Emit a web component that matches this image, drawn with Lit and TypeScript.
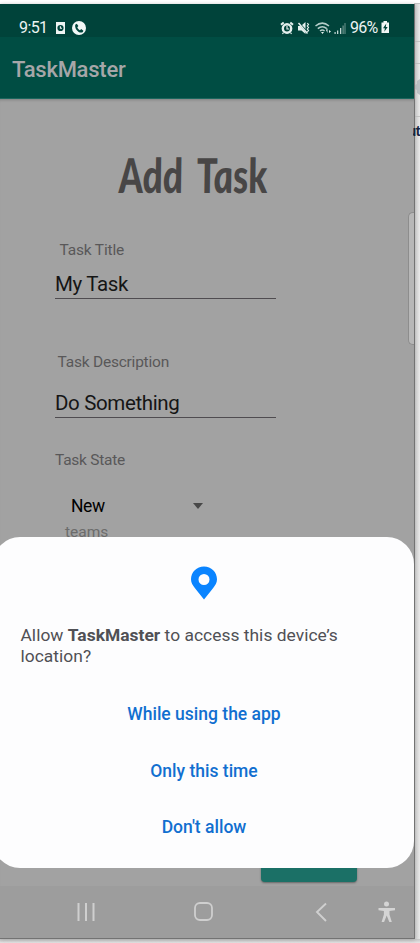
import { LitElement, html, css, svg } from "lit";
import { customElement } from "lit/decorators.js";

const statusLeft = svg`
  <path fill="#eef5f3" d="M1 1h9v12H1z"/><circle cx="5.5" cy="7" r="3.1" fill="#00453c"/>
  <path d="M5.4 5.2v2h1.6" fill="none" stroke="#eef5f3" stroke-width="1.1"/>
  <circle cx="24" cy="7" r="7" fill="#f2f8f7"/>
  <path fill="#00453c" d="M20.2 3.7l1.6-.9 1.6 2.3-1.1 1.2c.5 1.3 1.4 2.3 2.7 2.9l1.2-1.1 2.2 1.6c-.3 1.2-1.1 1.9-2.2 1.9-3.5-.2-6.600-4-6-7.900z"/>`;

const statusRight = svg`
  <g fill="none" stroke="#e4efed">
    <circle cx="7" cy="7.500" r="4.200" stroke-width="2.400"/><path stroke-width="1.2" d="M7 5v3h2.200M3.500 11.500l-1 1.500M10.500 11.500l1 1.500"/>
    <path stroke-width="2" d="M1 3.800L3.700 1.500M13 3.800L10.300 1.500"/>
    <path stroke-width="1.500" d="M18.500 2l9 10.500"/>
    <path stroke-width="1.200" d="M27.300 2l1.200 1.500-1.200 1.500 1.200 1.500-1.200 1.500 1.200 1.500-1.200 1.500"/>
    <g stroke="#b4cdc9" stroke-width="1.500"><path d="M35.500 5q6.800-5.800 13.500 0M37.800 7.600q4.500-3.800 9 0M40 10q2.300-1.900 4.600 0"/></g>
  </g>
  <path fill="#e4efed" d="M18 5h2.500l5 6v2l-4-3.500H18zM22 4l3.500-3v7zM41 11h3l-1.500 2zM46 9l1.500-1.800V12zM49 9l2 1.500-2 1.500z"/>
  <g fill="#c4d7d4"><path d="M54.500 11h1.200v2h-1.200zM57 9.500h1.300V13H57zM60 7h1.300v6H60z"/></g>
  <path fill="#6d958e" d="M62.500 4.500h1.200V13h-1.200zM64.500 2h1V13h-1z"/>`;

@customElement("app-root")
class AppRoot extends LitElement {
  static styles = css`
    :host { display: block; position: relative; width: 420px; height: 943px; overflow: hidden; background: #fff; font-family: Roboto, sans-serif; }
    * { box-sizing: border-box; }
    .desktop { display: flex; flex-direction: column; align-items: flex-end; height: 943px; background: linear-gradient(90deg, transparent 414px, #cfcfcf 414px, #e9e9e9 420px); }
    .edge { width: 6px; border-bottom: 1px solid #c4c4c4; flex: none; overflow: hidden; }
    .e0 { height: 4px; background: #fff; } .e1 { height: 38px; } .e2 { height: 22px; } .e3 { height: 53px; padding: 14px 0 0 1px; }
    .e3 svg { display: block; }
    .edge-word { width: 7px; height: 26px; overflow: hidden; font: 700 14px/26px "Liberation Sans", sans-serif; color: #16243c; display: flex; justify-content: flex-end; margin-top: 1px; letter-spacing: -.5px; position: relative; z-index: 1; }
    .shadow { margin-top: auto; width: 420px; height: 4px; background: linear-gradient(#c5c5c5, #e6e6e6); }
    .phone { position: absolute; left: 0; top: 4px; width: 415px; height: 935px; display: flex; flex-direction: column; background: #a2a2a2; border: solid #737373; border-width: 0 1px 1px 0; overflow: hidden; box-shadow: 0 1px 4px #aaa; }
    .status { height: 33px; flex: none; background: #00433a; display: flex; align-items: center; padding: 14px 24px 0 19px; color: #edf4f3; font-size: 16px; line-height: 20px; }
    .status svg { display: block; flex: none; }
    .time { display: block; width: 28px; white-space: nowrap; letter-spacing: -.6px; }
    .notes { margin-left: 8px; }
    .sys { margin-left: auto; }
    .pct { display: block; width: 31px; margin-left: 4px; white-space: nowrap; letter-spacing: -.8px; }
    .bar { height: 62px; flex: none; background: #004d43; border-bottom: 1px solid #1b665d; padding: 18px 12px; color: #a6a6a8; font-size: 22px; line-height: 30px; font-weight: 500; letter-spacing: -.25px; }
    .content { flex: 1; display: flex; flex-direction: column; align-items: flex-start; padding-left: 55px; box-shadow: inset 0 3px 3px -2px #808080; }
    h1 { margin: 44px 0 0 63px; height: 60px; font: italic 900 48px/64px Lato, sans-serif; color: #484646; white-space: nowrap; transform: scaleX(.775) skewX(6deg); transform-origin: 0 50%; word-spacing: 9px; }
    .label { font-size: 15.500px; line-height: 24px; color: #595859; white-space: nowrap; letter-spacing: -.17px; }
    .title { margin: 35px 0 0 4.500px; }
    .desc { margin: 51px 0 0 2.500px; letter-spacing: -.22px; }
    .state { margin: 30px 0 0 0; letter-spacing: -.25px; }
    .field { width: 221px; height: 27px; border-bottom: 1px solid #4f4c50; font-size: 20.500px; line-height: 24px; color: #151515; white-space: nowrap; letter-spacing: -.36px; }
    .f1 { margin-top: 10px; } .f2 { margin-top: 17px; }
    .pick { display: flex; width: 148px; justify-content: space-between; align-items: center; margin-top: 22px; padding-left: 16px; font-size: 17.500px; line-height: 24px; letter-spacing: -.4px; color: #000; }
    .arrow { border: solid transparent; border-width: 6px 5.500px 0; border-top-color: #484848; }
    .teams { margin: 2px 0 0 10px; letter-spacing: 0; color: #6c6c6c; }
    .save { width: 96px; height: 40px; margin: auto 0 4px 206px; background: #1b7066; border-radius: 4px; box-shadow: 0 1px 2px #666; }
    .nav { height: 52px; flex: none; background: #9d9d9d; }
    .nav svg { display: block; }
    .handle { position: absolute; right: 0; top: 208px; width: 6px; height: 133px; border-radius: 5px 0 0 5px; background: #b7b7b7; border: 1px solid #8d8d8d; border-right: 0; }
    .dialog { position: absolute; left: -7px; right: 0; top: 533px; height: 331px; border-radius: 27px; background: #fdfdfe; display: flex; flex-direction: column; align-items: center; }
    .pin { display: block; margin-top: 29px; flex: none; }
    .ask { align-self: stretch; margin: 25px 0 0 27.500px; font-size: 17.400px; line-height: 20.500px; letter-spacing: .03px; color: #505055; white-space: nowrap; }
    .ask b { font-weight: 700; }
    .choice { border: 0; background: none; padding: 0 0 0 1px; margin: 0; height: 57px; font: 500 17.500px/57px Roboto, sans-serif; color: #116fd0; }
    .first { margin-top: 20px; }
    .last { height: 55px; line-height: 55px; }
  `;

  render() {
    return html`
      <div class="desktop">
        <div class="edge e0"></div><div class="edge e1"></div><div class="edge e2"></div>
        <div class="edge e3"><svg width="5" height="18"><path fill="#bcc1c5" d="M0 7l2-1V3l3-2v16l-3-2v-3l-2-1z"/></svg></div>
        <div class="edge-word">ut</div>
        <div class="shadow"></div>
      </div>
      <main class="phone">
        <div class="status">
          <span class="time">9:51</span>
          <svg class="notes" width="32" height="14">${statusLeft}</svg>
          <svg class="sys" width="66" height="14">${statusRight}</svg>
          <span class="pct">96%</span>
          <svg width="9" height="13"><path fill="#f2f7f6" d="M2.500 0h3.500v1.500H8V12H.5V1.500h2z"/><path fill="#00433a" d="M5.300 2.500L2 7.200h1.900l-.6 3.600 3.400-4.900H4.800z"/></svg>
        </div>
        <header class="bar">TaskMaster</header>
        <section class="content">
          <h1>Add Task</h1>
          <div class="label title">Task Title</div>
          <div class="field f1">My Task</div>
          <div class="label desc">Task Description</div>
          <div class="field f2">Do Something</div>
          <div class="label state">Task State</div>
          <div class="pick"><span>New</span><i class="arrow"></i></div>
          <div class="label teams">teams</div>
          <div class="save"></div>
        </section>
        <nav class="nav">
          <svg width="414" height="52" fill="none" stroke="#cfcfcf">
            <path stroke-width="2" d="M78.500 17v18M86 17v18M93.500 17v18"/>
            <rect x="195" y="17" width="17" height="17" rx="5" stroke-width="1.800"/>
            <path stroke-width="1.900" d="M326 17.500L317 26l9 9"/>
            <g fill="#d4d4d4" stroke="none"><circle cx="386.500" cy="18" r="2.500"/><path d="M378.500 22h16.500v2.200l-5.500.8v3.500l2.300 7.500h-2.500l-2.600-6.500-2.600 6.500h-2.500l2.300-7.500V25l-5.400-.8z"/></g>
          </svg>
        </nav>
        <div class="handle"></div>
        <section class="dialog">
          <svg class="pin" width="28" height="34"><path fill="#0a84ff" fill-rule="evenodd" d="M14 .5C6.700.500 1 6 1 13.300c0 3.500 1.700 6 4 9L14 33.500l9-11.200c2.300-3 4-5.500 4-9C27 6 21.300.500 14 .5zm0 7.500a5.500 5.500 0 1 1 0 11 5.500 5.500 0 0 1 0-11z"/></svg>
          <div class="ask">Allow <b>TaskMaster</b> to access this device’s<br>location?</div>
          <button class="choice first">While using the app</button>
          <button class="choice">Only this time</button>
          <button class="choice last">Don't allow</button>
        </section>
      </main>`;
  }
}
